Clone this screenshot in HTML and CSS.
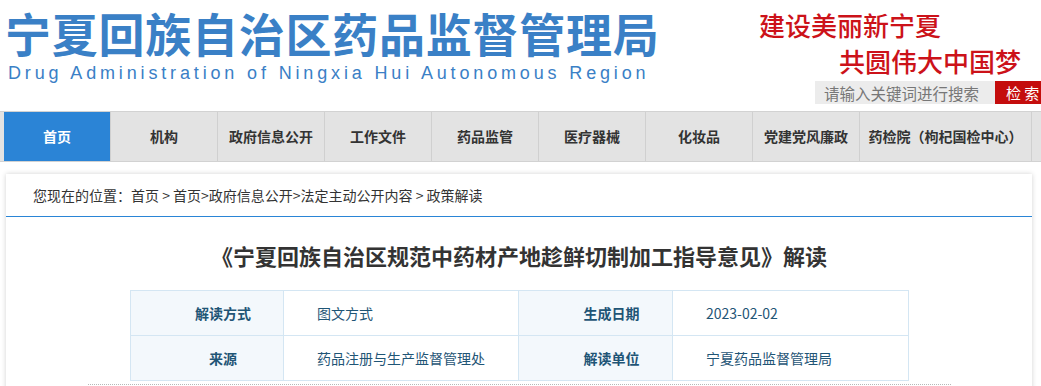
FILE: index.html
```html
<!DOCTYPE html>
<html lang="zh-CN">
<head>
<meta charset="utf-8">
<title>宁夏回族自治区药品监督管理局</title>
<link rel="stylesheet" href="styles.css">
</head>
<body>
<header class="header">
  <div class="logo">
    <div class="logo-cn">宁夏回族自治区药品监督管理局</div>
    <div class="logo-en">Drug Administration of Ningxia Hui Autonomous Region</div>
  </div>
  <div class="header-right">
    <div class="slogan slogan-1">建设美丽新宁夏</div>
    <div class="slogan slogan-2">共圆伟大中国梦</div>
    <form class="search">
      <input class="search-input" type="text" placeholder="请输入关键词进行搜索">
      <button class="search-btn" type="button">检 索</button>
    </form>
  </div>
</header>
<nav class="nav">
  <ul class="nav-list">
    <li class="nav-item active">首页</li>
    <li class="nav-item">机构</li>
    <li class="nav-item">政府信息公开</li>
    <li class="nav-item">工作文件</li>
    <li class="nav-item">药品监管</li>
    <li class="nav-item">医疗器械</li>
    <li class="nav-item">化妆品</li>
    <li class="nav-item">党建党风廉政</li>
    <li class="nav-item wide">药检院（枸杞国检中心）</li>
  </ul>
</nav>
<main class="box">
  <div class="crumb">您现在的位置：首页 &gt; 首页&gt;政府信息公开&gt;法定主动公开内容 &gt; 政策解读</div>
  <article class="article">
    <h1 class="title">《宁夏回族自治区规范中药材产地趁鲜切制加工指导意见》解读</h1>
    <div class="meta">
      <table class="meta-table">
        <colgroup>
          <col class="c-label"><col class="c-value"><col class="c-label2"><col class="c-value2">
        </colgroup>
        <tr>
          <td class="label">解读方式</td>
          <td class="value">图文方式</td>
          <td class="label">生成日期</td>
          <td class="value">2023-02-02</td>
        </tr>
        <tr>
          <td class="label">来源</td>
          <td class="value">药品注册与生产监督管理处</td>
          <td class="label">解读单位</td>
          <td class="value">宁夏药品监督管理局</td>
        </tr>
      </table>
    </div>
  </article>
</main>
</body>
</html>
```
FILE: styles.css
```css
* { box-sizing: border-box; }
body {
  margin: 0;
  background: #fff;
  font-family: "Noto Sans CJK SC", "Noto Sans", sans-serif;
  color: #333;
  overflow: hidden;
}
.header {
  display: flex;
  height: 111px;
}
.logo {
  padding-left: 5px;
  padding-top: 9px;
}
.logo-cn {
  font-size: 46px;
  line-height: 46px;
  font-weight: 700;
  letter-spacing: 0.75px;
  color: #3a80c6;
  white-space: nowrap;
}
.logo-en {
  margin-top: 9px;
  padding-left: 3px;
  font-family: "Liberation Sans", Arial, sans-serif;
  font-size: 18px;
  line-height: 18px;
  letter-spacing: 3.85px;
  color: #3a80c6;
  white-space: nowrap;
}
.header-right {
  margin-left: auto;
  width: 282px;
  padding-top: 12px;
  display: flex;
  flex-direction: column;
}
.slogan {
  font-size: 26px;
  line-height: 26px;
  font-weight: 500;
  color: #cc1219;
  white-space: nowrap;
}
.slogan-2 {
  margin-top: 10px;
  padding-left: 80px;
}
.search {
  margin: 7px 0 0 56px;
  display: flex;
  height: 23px;
}
.search-input {
  width: 180px;
  height: 23px;
  border: 0;
  outline: 0;
  margin: 0;
  padding: 0 0 0 9px;
  background: #ececec;
  font-family: inherit;
  font-size: 15.5px;
  color: #777;
}
.search-input::placeholder { color: #777; }
.search-btn {
  width: 46px;
  height: 23px;
  border: 0;
  margin: 0;
  background: #c40d0d;
  color: #fff;
  font-family: inherit;
  font-size: 15px;
  line-height: 23px;
  text-align: left;
  padding: 0 0 0 11px;
  white-space: nowrap;
}
.nav {
  background: #e3e3e3;
  border-top: 1px solid #d2d2d2;
  border-bottom: 1px solid #d2d2d2;
}
.nav-list {
  list-style: none;
  margin: 0;
  padding: 0 0 0 4px;
  display: flex;
  height: 49px;
}
.nav-item {
  width: 107px;
  flex: none;
  border-right: 1px solid #d0d0d0;
  font-size: 14px;
  font-weight: 700;
  color: #333;
  line-height: 49px;
  text-align: center;
  white-space: nowrap;
}
.nav-item.active {
  background: #2b84d6;
  color: #fff;
}
.nav-item.wide { width: 172px; }
.box {
  margin: 12px 9px 0 6px;
  background: #fff;
  box-shadow: 0 0 5px rgba(0, 0, 0, 0.18);
  min-height: 300px;
}
.crumb {
  height: 43px;
  line-height: 42px;
  padding-left: 27px;
  font-size: 14px;
  color: #333;
  border-bottom: 1px solid #2a85d6;
}
.article {
  padding-top: 22px;
}
.title {
  margin: 0;
  font-size: 22px;
  line-height: 32px;
  font-weight: 700;
  color: #333;
  text-align: center;
}
.meta {
  margin: 19px 81px 0 82px;
  padding-bottom: 3px;
  border-bottom: 1px dotted #b8b8b8;
}
.meta-table {
  width: 778px;
  margin: 0 auto;
  border-collapse: collapse;
  table-layout: fixed;
}
.c-label { width: 153px; }
.c-value { width: 235px; }
.c-label2 { width: 154px; }
.c-value2 { width: 236px; }
.meta-table td {
  height: 45px;
  border: 1px solid #d4e6f3;
  font-size: 14px;
  color: #1f5576;
  padding: 0;
}
.meta-table .label {
  background: #f3f8fc;
  font-weight: 700;
  text-align: center;
  padding-left: 32px;
}
.meta-table .value {
  padding-left: 33px;
  text-align: left;
}
```
